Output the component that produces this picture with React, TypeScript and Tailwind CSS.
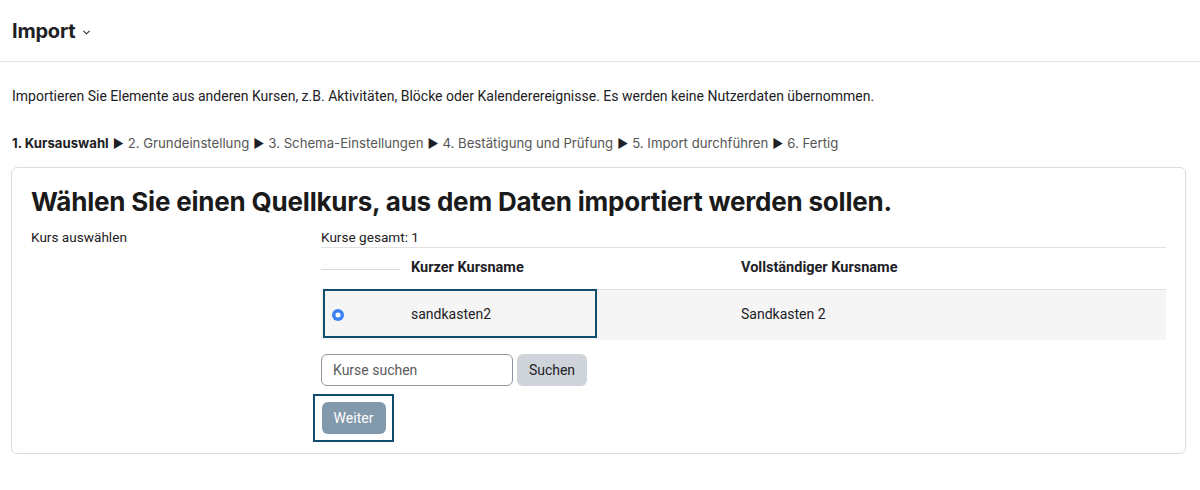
import { ChevronDown } from "lucide-react";

const steps = [
  "2. Grundeinstellung",
  "3. Schema-Einstellungen",
  "4. Bestätigung und Prüfung",
  "5. Import durchführen",
  "6. Fertig",
];

export default function App() {
  return (
    <div className="min-h-[490px] bg-white text-[#1d2125] font-['Inter','Liberation_Sans',sans-serif]">
      <header className="h-[62px] border-b border-[#e3e3e3] flex items-center px-3">
        <h1 className="text-[20px] font-bold tracking-[-0.2px]">Import</h1>
        <ChevronDown size={11} strokeWidth={2.5} className="ml-[6px] mt-[3px] text-[#333]" />
      </header>

      <p className="mt-[24px] px-3 text-[14px] font-['Roboto',sans-serif] leading-[20px]">
        Importieren Sie Elemente aus anderen Kursen, z.B. Aktivitäten, Blöcke oder Kalenderereignisse. Es werden keine
        Nutzerdaten übernommen.
      </p>

      <div className="mt-[27px] px-3 text-[13.2px] leading-[20px] text-[#555]">
        <span className="font-bold text-[#1d2125]">1. Kursauswahl</span>
        {steps.map((s) => (
          <span key={s}>
            <span className="text-[#1d2125] mx-[4px] text-[12px]">▶</span>
            {s}
          </span>
        ))}
      </div>

      <section className="mx-[11px] mt-[13px] w-[1175px] h-[287px] border border-[#dcdcdc] rounded-[6px] px-[19px] pt-[17px]">
        <h2 className="text-[26px] font-bold leading-[34px] tracking-[-0.2px] text-[#1a1a1a]">
          Wählen Sie einen Quellkurs, aus dem Daten importiert werden sollen.
        </h2>

        <div className="flex mt-[8px] font-['Roboto',sans-serif] text-[13.6px]">
          <div className="w-[290px] leading-[20px]">Kurs auswählen</div>

          <div className="w-[845px]">
            <div className="leading-[20px] border-b border-[#e2e2e2]">Kurse gesamt: 1</div>

            <div className="relative">
              <table className="w-full border-collapse text-[14px]">
                <thead>
                  <tr className="h-[41px] text-[14.5px]">
                    <th className="w-[79px] p-0 align-middle">
                      <div className="h-px bg-[#d8d8d8] mt-[2px]" />
                    </th>
                    <th className="w-[330px] text-left font-bold px-[11px] border-b border-[#dedede]">Kurzer Kursname</th>
                    <th className="text-left font-bold px-[11px] border-b border-[#dedede]">Vollständiger Kursname</th>
                  </tr>
                </thead>
                <tbody>
                  <tr className="h-[51px] bg-[#f5f5f5]">
                    <td className="pl-[11px]">
                      <span className="block w-[12px] h-[12px] rounded-full bg-[#3b82f6] relative">
                        <span className="absolute inset-[0px] rounded-full bg-white scale-[0.42]" />
                      </span>
                    </td>
                    <td className="px-[11px]">sandkasten2</td>
                    <td className="px-[11px]">Sandkasten 2</td>
                  </tr>
                </tbody>
              </table>
              <div className="absolute left-[2px] top-[41px] w-[274px] h-[49px] border-2 border-[#0f4c6e] pointer-events-none" />
            </div>

            <div className="flex gap-[4px] mt-[14px]">
              <div className="w-[192px] h-[32px] border border-[#8f959e] rounded-[6px] flex items-center px-[11px] text-[#5c5c5c] text-[14px]">
                Kurse suchen
              </div>
              <button className="w-[70px] h-[32px] rounded-[6px] bg-[#ced4da] text-[14px] text-[#1d2125]">Suchen</button>
            </div>

            <div className="mt-[8px] -ml-[8px] w-[81px] h-[48px] border-2 border-[#0f4c6e] flex items-center justify-center">
              <button className="w-[64px] h-[32px] rounded-[6px] bg-[#8298ab] text-white text-[14px]">Weiter</button>
            </div>
          </div>
        </div>
      </section>
    </div>
  );
}
